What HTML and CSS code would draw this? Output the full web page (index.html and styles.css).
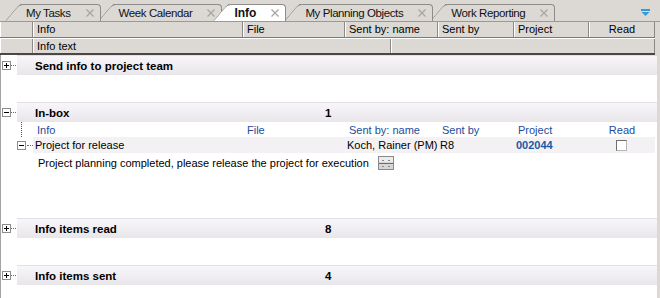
FILE: index.html
```html
<!DOCTYPE html>
<html lang="en">
<head>
  <meta charset="UTF-8" />
  <title>Info</title>
  <link rel="stylesheet" href="styles.css">
</head>
<body>

<div class="tabbar">
  <div class="tabs">
    <div class="tab t1">My Tasks<svg class="close" width="8" height="8"><path d="M0.5 0.5L7.5 7.5M7.5 0.5L0.5 7.5"/></svg></div>
    <div class="tab t2">Week Calendar<svg class="close" width="8" height="8"><path d="M0.5 0.5L7.5 7.5M7.5 0.5L0.5 7.5"/></svg></div>
    <div class="tab t3 active">Info<svg class="close" width="8" height="8"><path d="M0.5 0.5L7.5 7.5M7.5 0.5L0.5 7.5"/></svg></div>
    <div class="tab t4">My Planning Objects<svg class="close" width="8" height="8"><path d="M0.5 0.5L7.5 7.5M7.5 0.5L0.5 7.5"/></svg></div>
    <div class="tab t5">Work Reporting<svg class="close" width="8" height="8"><path d="M0.5 0.5L7.5 7.5M7.5 0.5L0.5 7.5"/></svg></div>
  </div>
  <svg class="tab-menu" width="9" height="7"><rect x="0" y="0" width="9" height="2" fill="#3a9ad9"/><polygon points="0.5,3 8.5,3 4.5,7" fill="#3a9ad9"/></svg>
</div>

<div class="head-row row1">
  <div class="hcell c0"></div>
  <div class="hcell c-info">Info</div>
  <div class="hcell c-file">File</div>
  <div class="hcell c-sbn">Sent by: name</div>
  <div class="hcell c-sb">Sent by</div>
  <div class="hcell c-proj">Project</div>
  <div class="hcell c-read">Read</div>
</div>
<div class="head-row row2">
  <div class="hcell c0"></div>
  <div class="hcell c-text">Info text</div>
  <div class="hcell c-rest"></div>
</div>

<div class="panel">

  <div class="group">
    <div class="group-head">
      <div class="gutter">
        <svg class="toggle" width="9" height="9"><rect x="0.5" y="0.5" width="8" height="8" fill="#fff" stroke="#8c8c8c"/><path d="M2 4.5h5M4.5 2v5" stroke="#000"/></svg>
        <span class="dots"></span>
      </div>
      <div class="bar">
        <span class="title">Send info to project team</span>
        <span class="count"></span>
      </div>
    </div>
  </div>

  <div class="group">
    <div class="group-head">
      <div class="gutter">
        <svg class="toggle" width="9" height="9"><rect x="0.5" y="0.5" width="8" height="8" fill="#fff" stroke="#8c8c8c"/><path d="M2 4.5h5" stroke="#000"/></svg>
        <span class="dots"></span>
      </div>
      <div class="bar">
        <span class="title">In-box</span>
        <span class="count">1</span>
      </div>
    </div>

    <div class="details">
      <div class="sub-head">
        <div class="tree"><span class="vline"></span></div>
        <div class="cell c-info">Info</div>
        <div class="cell c-file">File</div>
        <div class="cell c-sbn">Sent by: name</div>
        <div class="cell c-sb">Sent by</div>
        <div class="cell c-proj">Project</div>
        <div class="cell c-read center">Read</div>
      </div>
      <div class="item-row">
        <div class="tree">
          <svg class="toggle" width="9" height="9"><rect x="0.5" y="0.5" width="8" height="8" fill="#fff" stroke="#8c8c8c"/><path d="M2 4.5h5" stroke="#000"/></svg>
          <span class="dots short"></span>
        </div>
        <div class="cell c-info">Project for release</div>
        <div class="cell c-file"></div>
        <div class="cell c-sbn">Koch, Rainer (PM)</div>
        <div class="cell c-sb">R8</div>
        <div class="cell c-proj project-no">002044</div>
        <div class="cell c-read center"><span class="checkbox"></span></div>
      </div>
      <div class="desc-row">
        Project planning completed, please release the project for execution
        <svg class="edit-btn" width="16" height="14"><rect x="0.5" y="0.5" width="15" height="13" fill="#d6d6d6" stroke="#8a8a8a"/><rect x="1" y="1" width="14" height="5" fill="#ececec"/><path d="M1 7h14" stroke="#6e6e6e"/><path d="M4 4h2M10 4h2M4 10h2M10 10h2" stroke="#8a8a8a"/></svg>
      </div>
    </div>
  </div>

  <div class="group">
    <div class="group-head">
      <div class="gutter">
        <svg class="toggle" width="9" height="9"><rect x="0.5" y="0.5" width="8" height="8" fill="#fff" stroke="#8c8c8c"/><path d="M2 4.5h5M4.5 2v5" stroke="#000"/></svg>
        <span class="dots"></span>
      </div>
      <div class="bar">
        <span class="title">Info items read</span>
        <span class="count">8</span>
      </div>
    </div>
  </div>

  <div class="group">
    <div class="group-head">
      <div class="gutter">
        <svg class="toggle" width="9" height="9"><rect x="0.5" y="0.5" width="8" height="8" fill="#fff" stroke="#8c8c8c"/><path d="M2 4.5h5M4.5 2v5" stroke="#000"/></svg>
        <span class="dots"></span>
      </div>
      <div class="bar">
        <span class="title">Info items sent</span>
        <span class="count">4</span>
      </div>
    </div>
  </div>

</div>

</body>
</html>
```

FILE: styles.css
```css
body {
  margin: 0;
  width: 660px;
  height: 298px;
  overflow: hidden;
  background-color: #dcd9d4;
  font-family: 'Liberation Sans', Arial, sans-serif;
  font-size: 11px;
  color: #000;
}

/* tab strip */

.tabbar {
  display: flex;
  align-items: flex-end;
  height: 22px;
  box-sizing: border-box;
  border-bottom: 1px solid #9c9995;
}

.tabs {
  display: flex;
  align-items: flex-end;
  height: 17px;
  padding-left: 20px;
}

.tab {
  position: relative;
  display: flex;
  align-items: center;
  height: 17px;
  box-sizing: border-box;
  padding: 0 6px;
  margin-left: 12px;
  background: #dcd9d4;
  border-top: 1px solid #8e8c89;
  border-right: 1px solid #8e8c89;
  border-top-right-radius: 4px;
  font-size: 11.5px;
  letter-spacing: -0.4px;
  color: #111;
}

.tab::before {
  content: '';
  position: absolute;
  left: -15px;
  top: -1px;
  bottom: 0;
  width: 22px;
  background: inherit;
  border-left: 1px solid #8e8c89;
  border-top: 1px solid #8e8c89;
  border-top-left-radius: 5px;
  transform: skewX(-40deg);
  transform-origin: bottom left;
  z-index: -1;
}

.t1 { margin-left: 0; z-index: 5; }
.t2 { z-index: 4; }
.t3 { z-index: 10; margin-left: 6px; }
.t4 { z-index: 2; margin-left: 13px; }
.t5 { z-index: 1; }

.tab.active {
  background: #fff;
  font-weight: bold;
  font-size: 12px;
  letter-spacing: 0;
}

.close {
  margin-left: 15px;
  stroke: #a5a5a5;
  stroke-width: 1.3;
}

.tab-menu {
  align-self: flex-start;
  margin: 9px 10px 0 auto;
}

/* column header */

.head-row {
  display: flex;
  width: 655px;
  background: #dcd8d3;
  box-sizing: border-box;
}

.row1 {
  height: 16px;
  border-bottom: 1px solid #7d7a76;
}

.row2 {
  height: 17px;
  border-top: 1px solid #fff;
  border-bottom: 2px solid #4a4846;
}

.hcell {
  box-sizing: border-box;
  border-left: 1px solid #fff;
  border-right: 1px solid #8c8985;
  padding-left: 3px;
  line-height: 14px;
  white-space: nowrap;
}

.c0 { width: 33px; }
.c-info { width: 210px; }
.c-file { width: 102px; }
.c-sbn { width: 93px; }
.c-sb { width: 76px; }
.c-proj { width: 75px; }
.c-read { width: 66px; }
.c-text { width: 358px; }
.c-rest { width: 264px; }

.hcell.c-read {
  text-align: center;
  padding-left: 0;
}

/* tree panel */

.panel {
  width: 657px;
  height: 243px;
  box-sizing: border-box;
  background: #fff;
  border-left: 1px solid #a3a3a3;
}

.group {
  padding-bottom: 27px;
}

.group-head {
  display: flex;
  height: 20px;
}

.gutter {
  width: 16px;
  display: flex;
  align-items: center;
}

.toggle {
  display: block;
  margin-left: 1px;
  shape-rendering: crispEdges;
}

.dots {
  width: 5px;
  border-top: 1px dotted #6a6a6a;
}

.dots.short {
  width: 6px;
  margin-left: 1px;
}

.bar {
  flex: 1;
  display: flex;
  align-items: center;
  box-sizing: border-box;
  border-top: 1px solid #e2dfe5;
  background: linear-gradient(#f8f6f9, #e8e6ea);
  font-weight: bold;
  font-size: 11.5px;
}

.bar .title {
  width: 308px;
  box-sizing: border-box;
  padding-left: 18px;
}

/* in-box details */

.details {
  margin-left: 16px;
  padding-bottom: 19px;
}

.sub-head,
.item-row {
  display: flex;
  height: 16px;
  align-items: center;
}

.sub-head {
  height: 15px;
  color: #1c4c9c;
}

.tree {
  width: 16px;
  height: 100%;
  display: flex;
  align-items: center;
}

.vline {
  height: 100%;
  margin-left: 4px;
  border-left: 1px dotted #555;
}

.item-row .toggle {
  margin-left: 0;
}

.cell {
  box-sizing: border-box;
  padding-left: 4px;
  white-space: nowrap;
}

.item-row .cell {
  height: 16px;
  line-height: 16px;
  padding-left: 2px;
  background: #f3f1f4;
}

.center {
  text-align: center;
  padding-left: 0;
}

.item-row .center {
  padding-left: 0;
}

.project-no {
  font-weight: bold;
  color: #1a58a4;
}

.checkbox {
  display: inline-block;
  width: 11px;
  height: 11px;
  box-sizing: border-box;
  margin-top: 3px;
  margin-left: -2px;
  vertical-align: top;
  background: #fff;
  border: 1px solid #6e6e6e;
  border-right-color: #b5b5b5;
  border-bottom-color: #b5b5b5;
}

.desc-row {
  display: flex;
  align-items: center;
  height: 19px;
  padding-left: 21px;
  white-space: nowrap;
}

.edit-btn {
  margin-left: 9px;
  shape-rendering: crispEdges;
}
```
